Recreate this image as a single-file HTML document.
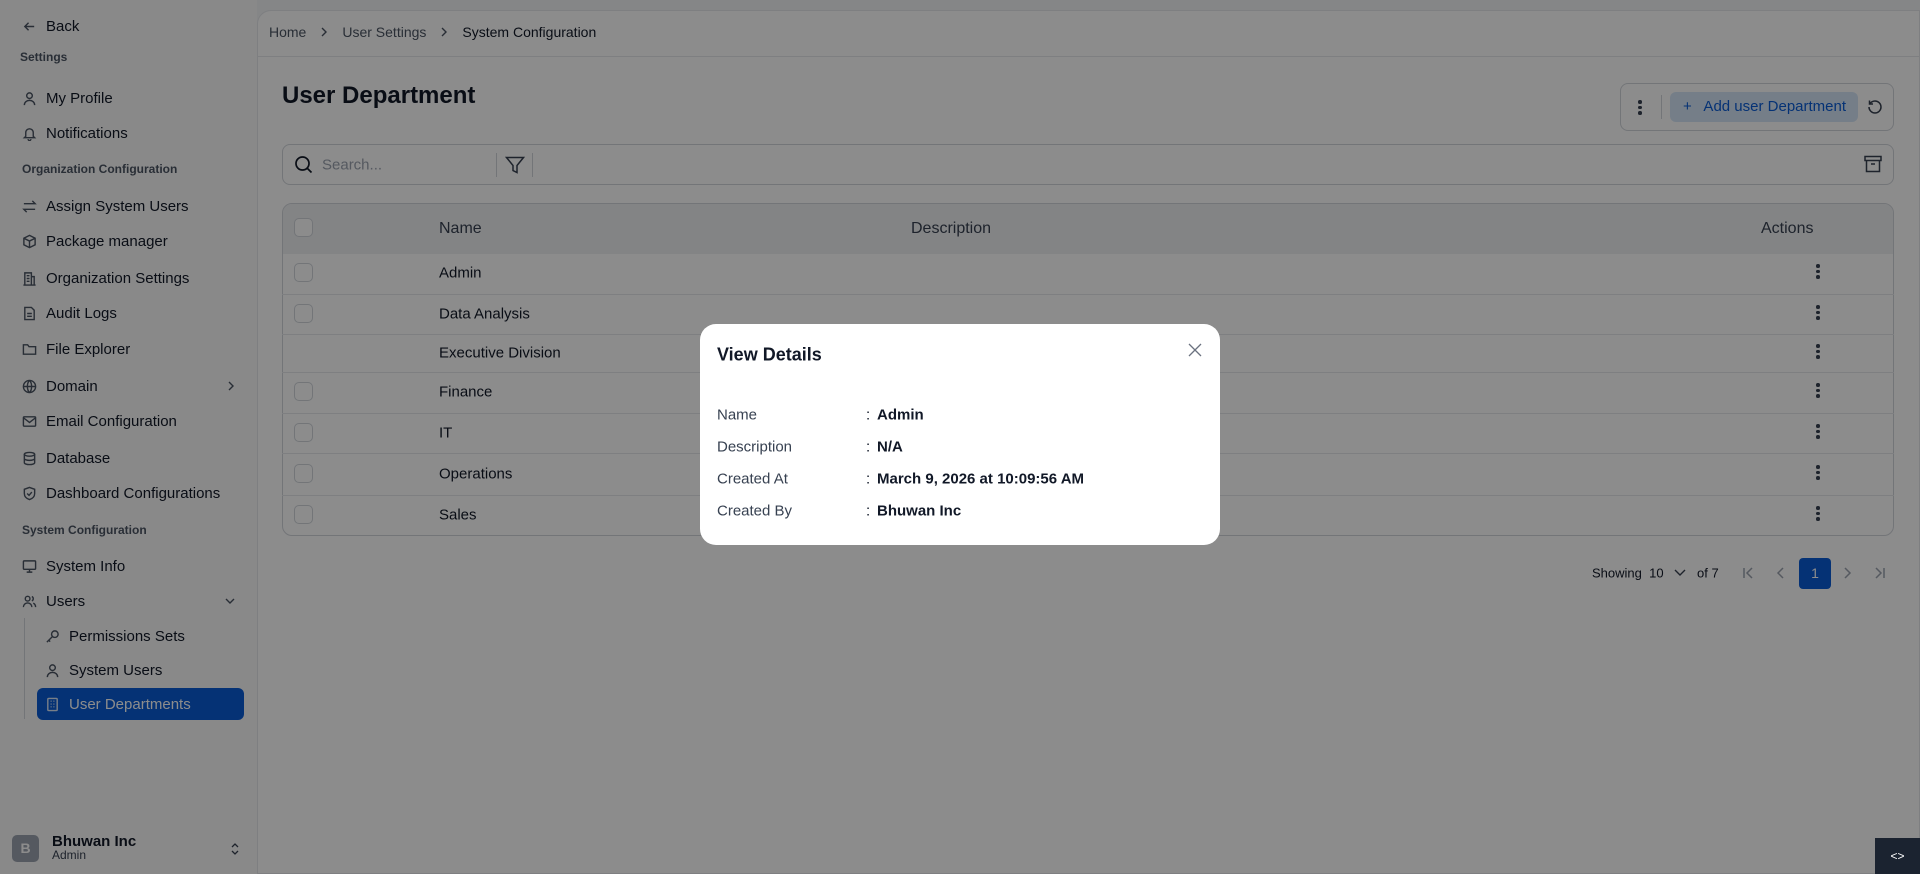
<!DOCTYPE html>
<html><head><meta charset="utf-8"><style>
*{box-sizing:border-box;margin:0;padding:0}
body{width:1920px;height:874px;overflow:hidden;font-family:"Liberation Sans",sans-serif;background:#f3f4f6;position:relative;color:#111827}
.abs{position:absolute}
.sb{left:0;top:0;width:257px;height:874px;background:#fafafa}
.it{position:absolute;left:22px;font-size:15px;color:#111827;display:flex;align-items:center;gap:9px;height:20px;transform:translateY(-50%)}
.it svg{width:15px;height:15px;stroke:#4b5563;fill:none;stroke-width:1.5}
.sec{position:absolute;left:22px;font-size:12px;font-weight:bold;color:#4b5563;transform:translateY(-50%)}
.main{left:257px;top:10px;width:1663px;height:864px;background:#fff;border-top-left-radius:14px;border:1px solid #e5e7eb}
.c{transform:translateY(-50%)}
.row{position:absolute;left:282px;width:1612px;border-top:1px solid #e5e7eb}
.cb{position:absolute;left:294px;width:19px;height:19px;border:1px solid #d1d5db;border-radius:5px;background:#fff}
.keb{position:absolute;left:1816px;width:4px}
.keb i{display:block;width:3.5px;height:3.5px;border-radius:50%;background:#374151;margin:2px 0}
.tx{position:absolute;font-size:15px;color:#111827;transform:translateY(-50%)}
.ov{left:0;top:0;width:1920px;height:874px;background:rgba(0,0,0,0.45)}
.modal{left:700px;top:324px;width:520px;height:221px;background:#fff;border-radius:16px}
.ml{position:absolute;left:17px;font-size:15px;color:#374151;transform:translateY(-50%)}
.mc{position:absolute;left:166px;font-size:15px;transform:translateY(-50%)}
.mv{position:absolute;left:177px;font-size:15px;font-weight:bold;transform:translateY(-50%)}
</style></head><body>
<div class="abs sb">
 <div class="it" style="top:26px;left:22px"><svg viewBox="0 0 16 16"><path d="M13 8H3M7 4L3 8l4 4"/></svg>Back</div>
 <div class="sec" style="top:57px;left:20px">Settings</div>
 <div class="it" style="top:98px"><svg viewBox="0 0 16 16"><circle cx="8" cy="5" r="3"/><path d="M2.5 15c0-3 2.5-5 5.5-5s5.5 2 5.5 5"/></svg>My Profile</div>
 <div class="it" style="top:133px"><svg viewBox="0 0 16 16"><path d="M4 11V7a4 4 0 018 0v4l1.5 1.5h-11zM6.5 14a1.5 1.5 0 003 0"/></svg>Notifications</div>
 <div class="sec" style="top:169px">Organization Configuration</div>
 <div class="it" style="top:206px"><svg viewBox="0 0 16 16"><path d="M2 5h12l-3-3M14 11H2l3 3"/></svg>Assign System Users</div>
 <div class="it" style="top:241px"><svg viewBox="0 0 16 16"><path d="M8 1.5l6 3v7l-6 3-6-3v-7zM2 4.5l6 3 6-3M8 7.5v7"/></svg>Package manager</div>
 <div class="it" style="top:278px"><svg viewBox="0 0 16 16"><path d="M3 15V2h7v13M10 6h3v9M1.5 15h13M5 5h3M5 8h3M5 11h3"/></svg>Organization Settings</div>
 <div class="it" style="top:313px"><svg viewBox="0 0 16 16"><path d="M3 1.5h7l3 3v10H3zM5.5 8h5M5.5 11h5"/></svg>Audit Logs</div>
 <div class="it" style="top:349px"><svg viewBox="0 0 16 16"><path d="M1.5 13V3h4.5l1.5 2h7v8z"/></svg>File Explorer</div>
 <div class="it" style="top:386px"><svg viewBox="0 0 16 16"><circle cx="8" cy="8" r="6.5"/><path d="M1.5 8h13M8 1.5c-3 3-3 10 0 13M8 1.5c3 3 3 10 0 13"/></svg>Domain</div>
 <svg class="abs" style="left:226px;top:380px" width="10" height="12" viewBox="0 0 10 12" fill="none" stroke="#4b5563" stroke-width="1.4"><path d="M3 2l4 4-4 4"/></svg>
 <div class="it" style="top:421px"><svg viewBox="0 0 16 16"><rect x="1.5" y="3" width="13" height="10" rx="1"/><path d="M1.5 4l6.5 5 6.5-5"/></svg>Email Configuration</div>
 <div class="it" style="top:458px"><svg viewBox="0 0 16 16"><ellipse cx="8" cy="3.5" rx="5.5" ry="2"/><path d="M2.5 3.5v9c0 1.1 2.5 2 5.5 2s5.5-.9 5.5-2v-9M2.5 8c0 1.1 2.5 2 5.5 2s5.5-.9 5.5-2"/></svg>Database</div>
 <div class="it" style="top:493px"><svg viewBox="0 0 16 16"><path d="M8 1.5l5.5 2v4.5c0 3.5-2.5 5.5-5.5 6.5-3-1-5.5-3-5.5-6.5V3.5zM5.5 8l2 2 3-3.5"/></svg>Dashboard Configurations</div>
 <div class="sec" style="top:530px">System Configuration</div>
 <div class="it" style="top:566px"><svg viewBox="0 0 16 16"><rect x="1.5" y="2" width="13" height="9" rx="1"/><path d="M8 11v3M5 14h6"/></svg>System Info</div>
 <div class="it" style="top:601px"><svg viewBox="0 0 16 16"><circle cx="6" cy="5" r="2.5"/><path d="M1.5 14c0-2.5 2-4.5 4.5-4.5s4.5 2 4.5 4.5M10.5 2.7a2.5 2.5 0 010 4.6M12 9.8c1.5.6 2.5 2.2 2.5 4.2"/></svg>Users</div>
 <svg class="abs" style="left:224px;top:596px" width="12" height="10" viewBox="0 0 12 10" fill="none" stroke="#4b5563" stroke-width="1.4"><path d="M2 3l4 4 4-4"/></svg>
 <div class="abs" style="left:24px;top:618px;width:1px;height:101px;background:#d1d5db"></div>
 <div class="it" style="top:636px;left:45px"><svg viewBox="0 0 16 16"><circle cx="10.5" cy="5.5" r="3.5"/><path d="M8 8l-6 6M4 12l1.5 1.5"/></svg>Permissions Sets</div>
 <div class="it" style="top:670px;left:45px"><svg viewBox="0 0 16 16"><circle cx="8" cy="5" r="3"/><path d="M2.5 15c0-3 2.5-5 5.5-5s5.5 2 5.5 5"/></svg>System Users</div>
 <div class="abs" style="left:37px;top:688px;width:207px;height:32px;background:#0a5cd6;border-radius:6px"></div>
 <div class="it" style="top:704px;left:45px;color:#fff"><svg viewBox="0 0 16 16" style="stroke:#dbe7f7"><rect x="3" y="1.5" width="10" height="13" rx="1"/><path d="M6 4.5h1M9 4.5h1M6 7.5h1M9 7.5h1M6 10.5h1M9 10.5h1"/></svg>User Departments</div>
 <div class="abs" style="left:12px;top:835px;width:27px;height:27px;background:#9ca3af;border-radius:5px;color:#fff;font-weight:bold;font-size:14px;text-align:center;line-height:27px">B</div>
 <div class="abs" style="left:52px;top:833px;font-size:15px;font-weight:bold;color:#111827">Bhuwan Inc</div>
 <div class="abs" style="left:52px;top:848px;font-size:12px;color:#374151">Admin</div>
 <svg class="abs" style="left:229px;top:841px" width="12" height="16" viewBox="0 0 12 16" fill="none" stroke="#374151" stroke-width="1.3"><path d="M3 6l3-3 3 3M3 10l3 3 3-3"/></svg>
</div>
<div class="abs main"></div>
<div class="abs c" style="left:269px;top:32px;font-size:14px;color:#4b5563;display:flex;align-items:center;gap:14px"><span>Home</span><svg width="8" height="12" viewBox="0 0 8 12" fill="none" stroke="#4b5563" stroke-width="1.4"><path d="M2 2l4 4-4 4"/></svg><span>User Settings</span><svg width="8" height="12" viewBox="0 0 8 12" fill="none" stroke="#4b5563" stroke-width="1.4"><path d="M2 2l4 4-4 4"/></svg><span style="color:#111827">System Configuration</span></div>
<div class="abs" style="left:258px;top:56px;width:1662px;height:1px;background:#e5e7eb"></div>
<div class="abs c" style="left:282px;top:96px;font-size:24px;font-weight:bold">User Department</div>
<div class="abs" style="left:1620px;top:83px;width:274px;height:48px;border:1px solid #d1d5db;border-radius:8px"></div>
<div class="keb" style="top:98px;left:1638px"><i></i><i></i><i></i></div>
<div class="abs" style="left:1661px;top:95px;width:1px;height:24px;background:#d1d5db"></div>
<div class="abs" style="left:1670px;top:92px;width:188px;height:30px;background:#d6e6f7;border-radius:6px;color:#0a5cd6;font-size:15px;line-height:30px;padding-left:13px">+&nbsp;&nbsp; Add user Department</div>
<svg class="abs" style="left:1866px;top:98px" width="18" height="18" viewBox="0 0 18 18" fill="none" stroke="#374151" stroke-width="1.5"><path d="M3 9a6 6 0 106-6 6.5 6.5 0 00-5 2.5M3.5 2.5v3.5H7"/></svg>
<div class="abs" style="left:282px;top:144px;width:1612px;height:41px;border:1px solid #d1d5db;border-radius:8px"></div>
<svg class="abs" style="left:294px;top:155px" width="20" height="20" viewBox="0 0 20 20" fill="none" stroke="#111827" stroke-width="1.7"><circle cx="8.5" cy="8.5" r="6.5"/><path d="M13.5 13.5l4 4"/></svg>
<div class="abs c" style="left:322px;top:165px;font-size:15px;color:#9ca3af">Search...</div>
<div class="abs" style="left:496px;top:153px;width:1px;height:24px;background:#d1d5db"></div>
<svg class="abs" style="left:505px;top:156px" width="20" height="18" viewBox="0 0 20 18" fill="none" stroke="#374151" stroke-width="1.5"><path d="M1.5 1.5h17l-6.5 8v7l-4-2v-5z"/></svg>
<div class="abs" style="left:532px;top:153px;width:1px;height:24px;background:#d1d5db"></div>
<svg class="abs" style="left:1864px;top:155px" width="18" height="18" viewBox="0 0 18 18" fill="none" stroke="#374151" stroke-width="1.5"><rect x="1" y="1.5" width="16" height="4"/><path d="M2.5 5.5v11h13v-11M7 9h4"/></svg>
<div class="abs" style="left:282px;top:203px;width:1612px;height:333px;border:1px solid #d1d5db;border-radius:10px;overflow:hidden">
 <div style="height:50px;background:#eef0f3"></div>
</div>
<div class="cb" style="top:218px"></div>
<div class="tx" style="left:439px;top:229px;font-size:16px;color:#374151">Name</div>
<div class="tx" style="left:911px;top:229px;font-size:16px;color:#374151">Description</div>
<div class="tx" style="left:1761px;top:229px;font-size:16px;color:#374151">Actions</div>
<div class="row" style="top:294px"></div><div class="row" style="top:334px"></div><div class="row" style="top:372px"></div><div class="row" style="top:413px"></div><div class="row" style="top:453px"></div><div class="row" style="top:495px"></div>
<div class="cb" style="top:263px"></div><div class="tx" style="left:439px;top:273px">Admin</div><div class="keb" style="top:262px"><i></i><i></i><i></i></div>
<div class="cb" style="top:304px"></div><div class="tx" style="left:439px;top:314px">Data Analysis</div><div class="keb" style="top:303px"><i></i><i></i><i></i></div>
<div class="tx" style="left:439px;top:353px">Executive Division</div><div class="keb" style="top:342px"><i></i><i></i><i></i></div>
<div class="cb" style="top:382px"></div><div class="tx" style="left:439px;top:392px">Finance</div><div class="keb" style="top:381px"><i></i><i></i><i></i></div>
<div class="cb" style="top:423px"></div><div class="tx" style="left:439px;top:433px">IT</div><div class="keb" style="top:422px"><i></i><i></i><i></i></div>
<div class="cb" style="top:464px"></div><div class="tx" style="left:439px;top:474px">Operations</div><div class="keb" style="top:463px"><i></i><i></i><i></i></div>
<div class="cb" style="top:505px"></div><div class="tx" style="left:439px;top:515px">Sales</div><div class="keb" style="top:504px"><i></i><i></i><i></i></div>
<div class="tx" style="left:1592px;top:573px;font-size:13px">Showing &nbsp;10</div>
<svg class="abs" style="left:1674px;top:568px" width="12" height="10" viewBox="0 0 12 10" fill="none" stroke="#374151" stroke-width="1.4"><path d="M1 2l5 5 5-5"/></svg>
<div class="tx" style="left:1697px;top:573px;font-size:13px">of 7</div>
<svg class="abs" style="left:1742px;top:566px" width="14" height="14" viewBox="0 0 14 14" fill="none" stroke="#9ca3af" stroke-width="1.5"><path d="M2 2v10M10 2L5 7l5 5"/></svg>
<svg class="abs" style="left:1776px;top:566px" width="10" height="14" viewBox="0 0 10 14" fill="none" stroke="#9ca3af" stroke-width="1.5"><path d="M7 2L2 7l5 5"/></svg>
<div class="abs" style="left:1799px;top:558px;width:32px;height:31px;background:#0a5cd6;border-radius:4px;color:#fff;font-size:14px;text-align:center;line-height:31px">1</div>
<svg class="abs" style="left:1842px;top:566px" width="10" height="14" viewBox="0 0 10 14" fill="none" stroke="#9ca3af" stroke-width="1.5"><path d="M3 2l5 5-5 5"/></svg>
<svg class="abs" style="left:1872px;top:566px" width="14" height="14" viewBox="0 0 14 14" fill="none" stroke="#9ca3af" stroke-width="1.5"><path d="M12 2v10M4 2l5 5-5 5"/></svg>
<div class="abs ov"></div>
<div class="abs" style="left:1875px;top:838px;width:45px;height:36px;background:#1b2330;color:#fff;font-size:12px;text-align:center;line-height:36px">&lt;&gt;</div>
<div class="abs modal">
 <div class="abs c" style="left:17px;top:31px;font-size:18px;font-weight:bold">View Details</div>
 <svg class="abs" style="left:488px;top:19px" width="14" height="14" viewBox="0 0 14 14" stroke="#6b7280" stroke-width="1.3"><path d="M1 1l12 12M13 1L1 13"/></svg>
 <div class="ml" style="top:91px">Name</div><div class="mc" style="top:91px">:</div><div class="mv" style="top:91px">Admin</div>
 <div class="ml" style="top:123px">Description</div><div class="mc" style="top:123px">:</div><div class="mv" style="top:123px">N/A</div>
 <div class="ml" style="top:155px">Created At</div><div class="mc" style="top:155px">:</div><div class="mv" style="top:155px">March 9, 2026 at 10:09:56 AM</div>
 <div class="ml" style="top:187px">Created By</div><div class="mc" style="top:187px">:</div><div class="mv" style="top:187px">Bhuwan Inc</div>
</div>
</body></html>
